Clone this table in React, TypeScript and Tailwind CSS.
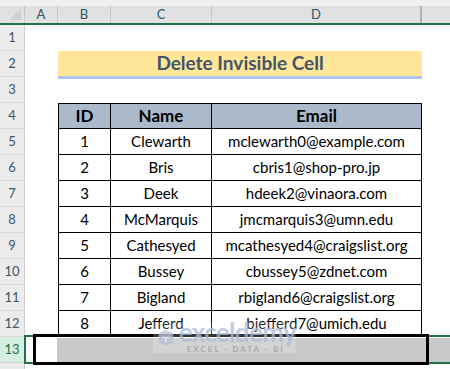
import React from 'react';

type Person = { id: number; name: string; email: string };

const people: Person[] = [
  { id: 1, name: 'Clewarth', email: 'mclewarth0@example.com' },
  { id: 2, name: 'Bris', email: 'cbris1@shop-pro.jp' },
  { id: 3, name: 'Deek', email: 'hdeek2@vinaora.com' },
  { id: 4, name: 'McMarquis', email: 'jmcmarquis3@umn.edu' },
  { id: 5, name: 'Cathesyed', email: 'mcathesyed4@craigslist.org' },
  { id: 6, name: 'Bussey', email: 'cbussey5@zdnet.com' },
  { id: 7, name: 'Bigland', email: 'rbigland6@craigslist.org' },
  { id: 8, name: 'Jefferd', email: 'bjefferd7@umich.edu' },
];

const font = { fontFamily: 'Lato, "Open Sans", sans-serif' };

// row number cell on the left edge
const RowHead = ({ n, active }: { n?: number; active?: boolean }) => (
  <div
    className={
      'w-[25px] shrink-0 flex items-center justify-center text-[13px] border-r border-b ' +
      (active
        ? 'bg-[#d3f0e0] text-[#217346] border-r-[#d0d0d0] border-b-[#d4d4d4]'
        : 'bg-[#ececec] text-[#3b5566] border-r-[#d0d0d0] border-b-[#d9d9d9]')
    }
  >
    {n}
  </div>
);

const App: React.FC = () => {
  return (
    <div className="w-[450px] h-[369px] overflow-hidden bg-white relative" style={font}>
      {/* top strip */}
      <div className="h-[6px] bg-[#f0f0f0]" />

      {/* column headers */}
      <div className="flex h-[19px] bg-[#e1e1e1] border-b-2 border-[#217346] text-[13px] text-[#2f5566]">
        <div className="w-[25px] shrink-0 relative border-r border-[#c6c6c6]">
          <div className="absolute right-[3px] bottom-[3px] w-0 h-0 border-l-[12px] border-l-transparent border-b-[12px] border-b-[#cfcfcf]" />
        </div>
        <div className="w-[33px] shrink-0 flex items-center justify-center border-r border-[#c6c6c6]">A</div>
        <div className="w-[53px] shrink-0 flex items-center justify-center border-r border-[#c6c6c6]">B</div>
        <div className="w-[101px] shrink-0 flex items-center justify-center border-r border-[#c6c6c6]">C</div>
        <div className="w-[210px] shrink-0 flex items-center justify-center border-r-2 border-[#b0b0b0]">D</div>
        <div className="flex-1" />
      </div>

      {/* row 1 */}
      <div className="flex h-[26px]">
        <RowHead n={1} />
      </div>

      {/* row 2: title */}
      <div className="flex h-[26px]">
        <RowHead n={2} />
        <div className="w-[33px] shrink-0" />
        <div className="w-[364px] shrink-0 h-[28px] bg-[#ffe699] border-b-[3px] border-[#b4c6e7] flex items-center justify-center text-[19px] font-bold text-[#44546a] relative z-10">
          Delete Invisible Cell
        </div>
      </div>

      {/* row 3 */}
      <div className="flex h-[26px]">
        <RowHead n={3} />
      </div>

      {/* row 4: table header */}
      <div className="flex h-[26px]">
        <RowHead n={4} />
        <div className="w-[33px] shrink-0" />
        <div className="w-[53px] shrink-0 bg-[#acb9ca] border border-black flex items-center justify-center text-[17px] font-bold">ID</div>
        <div className="w-[101px] shrink-0 bg-[#acb9ca] border-y border-r border-black flex items-center justify-center text-[17px] font-bold">Name</div>
        <div className="w-[210px] shrink-0 bg-[#acb9ca] border-y border-r border-black flex items-center justify-center text-[17px] font-bold">Email</div>
      </div>

      {/* rows 5-12: data */}
      {people.map((p, i) => (
        <div key={p.id} className="flex h-[26px]">
          <RowHead n={i + 5} />
          <div className="w-[33px] shrink-0" />
          <div className="w-[53px] shrink-0 border-x border-b border-black flex items-center justify-center text-[15px]">{p.id}</div>
          <div className="w-[101px] shrink-0 border-r border-b border-black flex items-center justify-center text-[15px]">{p.name}</div>
          <div className="w-[210px] shrink-0 border-r border-b border-black flex items-center justify-center text-[15px]">{p.email}</div>
        </div>
      ))}

      {/* row 13: selected, empty */}
      <div className="flex h-[26px] relative">
        <RowHead n={13} active />
        <div className="w-[32px] shrink-0" />
        <div className="flex-1 bg-[#c8c8c8] my-[1px]" />

        {/* excel selection */}
        <div className="absolute left-[24px] right-[-4px] top-[-2px] bottom-[-1px] border-2 border-[#217346]" />
        {/* drawn marker box */}
        <div className="absolute left-[33px] w-[396px] top-[-3px] bottom-[-2px] border-[3px] border-black" />

        {/* watermark */}
        <div className="absolute left-[153px] top-[-15px] w-[143px] h-[31px] bg-white/25 flex items-center gap-1 pl-1 opacity-80">
          <svg width="26" height="26" viewBox="0 0 22 22">
            <path d="M2 5 L11 1 L20 5 L20 17 L11 21 L2 17 Z" fill="#b9c6dc" />
            <path d="M6 8 L11 11 L16 8 M11 11 L11 17" stroke="#e8edf5" strokeWidth="2" fill="none" />
          </svg>
          <div className="flex flex-col leading-none">
            <span className="text-[26px] font-bold text-[#aebfda] tracking-tight -mt-1">exceldemy</span>
            <span className="text-[8px] font-bold text-[#9aa3ae] tracking-[2px] ml-2">EXCEL · DATA · BI</span>
          </div>
        </div>
      </div>

      {/* row 14 partial */}
      <div className="flex h-[26px]">
        <RowHead />
      </div>
    </div>
  );
};

export default App;
